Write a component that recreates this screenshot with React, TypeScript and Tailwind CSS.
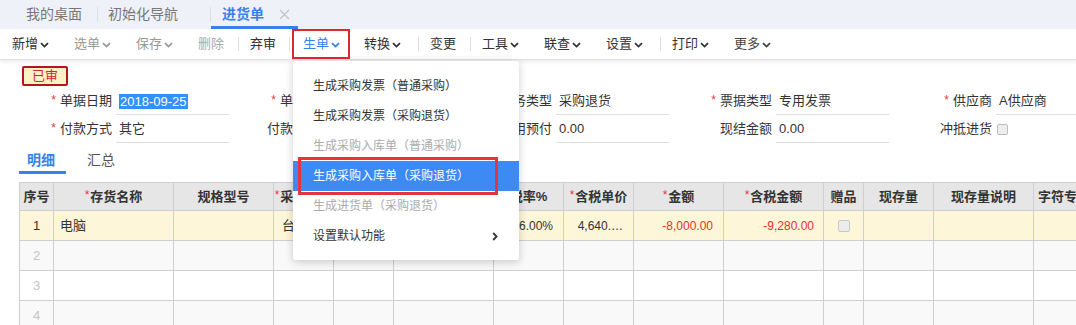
import React from "react";

const Chev = ({ className = "" }: { className?: string }) => (
  <svg width="9" height="6" viewBox="0 0 9 6" className={className}>
    <path d="M1 1.2 L4.5 4.6 L8 1.2" stroke="currentColor" strokeWidth="1.8" fill="none" />
  </svg>
);

type TItem =
  | { sep: true; mr: string }
  | { sep?: false; t: string; chev?: boolean; w: string; c: string; boxed?: boolean };

const toolbar: TItem[] = [
  { t: "新增", chev: true, w: "w-[62px]", c: "text-[#333]" },
  { t: "选单", chev: true, w: "w-[62px]", c: "text-[#999]" },
  { t: "保存", chev: true, w: "w-[62px]", c: "text-[#999]" },
  { t: "删除", w: "w-[40px]", c: "text-[#aaa]" },
  { sep: true, mr: "mr-[11px]" },
  { t: "弃审", w: "w-[39px]", c: "text-[#333]" },
  { sep: true, mr: "mr-[13px]" },
  { t: "生单", chev: true, w: "w-[61px]", c: "text-[#3a80ea]", boxed: true },
  { t: "转换", chev: true, w: "w-[54px]", c: "text-[#333]" },
  { sep: true, mr: "mr-[11px]" },
  { t: "变更", w: "w-[40px]", c: "text-[#333]" },
  { sep: true, mr: "mr-[11px]" },
  { t: "工具", chev: true, w: "w-[62px]", c: "text-[#333]" },
  { t: "联查", chev: true, w: "w-[62px]", c: "text-[#333]" },
  { t: "设置", chev: true, w: "w-[54px]", c: "text-[#333]" },
  { sep: true, mr: "mr-[11px]" },
  { t: "打印", chev: true, w: "w-[62px]", c: "text-[#333]" },
  { t: "更多", chev: true, w: "w-[62px]", c: "text-[#444]" },
];

type Field = { star?: boolean; label: string; value?: React.ReactNode; check?: boolean };

const row1: Field[] = [
  { star: true, label: "单据日期", value: <span className="bg-[#3390ff] text-white leading-[15px] px-[1px]">2018-09-25</span> },
  { star: true, label: "单据编号", value: "" },
  { star: true, label: "业务类型", value: "采购退货" },
  { star: true, label: "票据类型", value: "专用发票" },
  { star: true, label: "供应商", value: "A供应商" },
];
const row2: Field[] = [
  { star: true, label: "付款方式", value: "其它" },
  { label: "付款到期日", value: "" },
  { label: "使用预付", value: "0.00" },
  { label: "现结金额", value: "0.00" },
  { label: "冲抵进货", check: true },
];

const FieldRow = ({ fields }: { fields: Field[] }) => (
  <div className="flex h-[28px]">
    {fields.map((f, i) => (
      <div key={i} className="w-[220px] shrink-0 flex h-full">
        <div className="w-[112px] shrink-0 flex justify-end items-center h-[26px] text-[#333]">
          {f.star && <span className="text-[#e0393e] text-[12px] mr-[4px] relative top-[-1px]">*</span>}
          <span className="whitespace-nowrap">{f.label}</span>
        </div>
        {f.check ? (
          <div className="ml-[5px] h-[26px] flex items-center">
            <div className="w-[11px] h-[11px] border border-[#bdbdbd] bg-[#eeeeee] rounded-[2px]" />
          </div>
        ) : (
          <div className="ml-[4px] w-[113px] shrink-0 h-[27px] border-b border-[#dddddd] flex items-center pl-[3px] text-[#333] whitespace-nowrap">
            {f.value}
          </div>
        )}
      </div>
    ))}
  </div>
);

const widths = [
  "w-[35px] border-l",
  "w-[120px]",
  "w-[100px]",
  "w-[60px]",
  "w-[60px]",
  "w-[100px]",
  "w-[70px]",
  "w-[70px]",
  "w-[90px]",
  "w-[100px]",
  "w-[40px]",
  "w-[70px]",
  "w-[100px]",
  "w-[100px]",
];

const headers: [boolean, string][] = [
  [false, "序号"],
  [true, "存货名称"],
  [false, "规格型号"],
  [true, "采购单位"],
  [true, "数量"],
  [false, "无税单价"],
  [false, "税率%"],
  [true, "含税单价"],
  [true, "金额"],
  [true, "含税金额"],
  [false, "赠品"],
  [false, "现存量"],
  [false, "现存量说明"],
  [false, "字符专用自由项"],
];

const Check = () => <div className="w-[12px] h-[12px] border border-[#c9c9c9] bg-[#ececec] rounded-[2px]" />;

const menuItems: { t: string; dis?: boolean; active?: boolean; sub?: boolean }[] = [
  { t: "生成采购发票（普通采购）" },
  { t: "生成采购发票（采购退货）" },
  { t: "生成采购入库单（普通采购）", dis: true },
  { t: "生成采购入库单（采购退货）", active: true },
  { t: "生成进货单（采购退货）", dis: true },
  { t: "设置默认功能", sub: true },
];

export default function App() {
  const rowBgs = ["bg-[#fdf6d8]", "bg-[#f9f9f9]", "bg-white", "bg-[#f9f9f9]"];
  return (
    <div className="relative w-[1076px] h-[325px] overflow-hidden bg-white text-[13px] text-[#333] font-['Liberation_Sans','Noto_Sans_CJK_SC',sans-serif]">
      {/* top tabs */}
      <div className="h-[29px] bg-[#eef1f7] flex items-stretch text-[14px]">
        <div className="flex items-center pl-[26px] pr-[15px] text-[#777]">我的桌面</div>
        <div className="w-px bg-[#dcdfe6] my-[7px]" />
        <div className="flex items-center pl-[10px] pr-[32px] text-[#777]">初始化导航</div>
        <div className="w-px bg-[#dcdfe6] my-[7px]" />
        <div className="flex items-center pl-[11px] pr-[8px] pt-[3px] border-b-[3px] border-[#3a80ea]">
          <span className="font-bold text-[#3a80ea]">进货单</span>
          <svg width="11" height="11" viewBox="0 0 11 11" className="ml-[15px]">
            <path d="M1 1 L10 10 M10 1 L1 10" stroke="#c4c4c4" strokeWidth="1.4" />
          </svg>
        </div>
      </div>

      {/* toolbar */}
      <div className="relative z-[1] h-[31px] bg-white border-b border-[#e2e2e2] shadow-[0_2px_4px_rgba(0,0,0,0.08)] flex items-center pl-[12px]">
        {toolbar.map((it, i) =>
          it.sep ? (
            <div key={i} className={`w-px h-[14px] bg-[#dddddd] ${it.mr}`} />
          ) : (
            <div key={i} className={`relative h-full flex items-center shrink-0 ${it.w} ${it.c}`}>
              <span>{it.t}</span>
              {it.chev && <Chev className="ml-[2px] mt-[1px]" />}
              {it.boxed && (
                <div className="absolute left-[-11px] top-0 w-[58px] h-[30px] border-2 border-[#e0282e]" />
              )}
            </div>
          )
        )}
      </div>

      {/* form */}
      <div className="pt-[6px]">
        <div className="ml-[22px] w-[46px] h-[20px] border-2 border-[#b5161c] bg-[#fdf1c6] text-[#d3262b] flex items-center justify-center rounded-[2px] text-[13px]">
          已审
        </div>
        <div className="mt-[2px]">
          <FieldRow fields={row1} />
          <FieldRow fields={row2} />
        </div>
      </div>

      {/* detail tabs */}
      <div className="ml-[19px] h-[30px] flex items-stretch text-[14px]">
        <div className="w-[47px] pl-[8px] pt-[5px] flex items-center border-b-[3px] border-[#3a80ea] font-bold text-[#3a80ea]">明细</div>
        <div className="ml-[21px] pt-[5px] pb-[3px] flex items-center text-[#555]">汇总</div>
      </div>

      {/* table */}
      <div className="ml-[19px] mt-[8px] w-max">
        <div className="flex h-[29px] bg-[#e6e6e6] border-t border-b border-[#cfcfcf]">
          {headers.map(([star, h], i) => (
            <div key={i} className={`${widths[i]} shrink-0 border-r border-[#cfcfcf] flex items-center justify-center font-bold whitespace-nowrap overflow-hidden`}>
              {star && <span className="text-[#e0393e] font-normal text-[12px] mr-[1px] relative top-[-2px]">*</span>}
              {h}
            </div>
          ))}
        </div>
        {[0, 1, 2, 3].map((r) => (
          <div key={r} className={`flex h-[30px] border-b border-[#cfcfcf] ${rowBgs[r]}`}>
            {widths.map((w, c) => {
              let content: React.ReactNode = null;
              let cls = "justify-start";
              if (c === 0) {
                content = <span className={r === 0 ? "text-[#333]" : "text-[#c4c4c4]"}>{r + 1}</span>;
                cls = "justify-center";
              } else if (r === 0) {
                if (c === 1) { content = "电脑"; cls = "justify-start pl-[6px]"; }
                if (c === 3) { content = "台"; cls = "justify-start pl-[8px]"; }
                if (c === 4) { content = <span className="text-[12px] text-[#e5322d]">-2.00</span>; cls = "justify-end pr-[10px]"; }
                if (c === 5) { content = <span className="text-[12px]">4,000.00</span>; cls = "justify-end pr-[10px]"; }
                if (c === 6) { content = <span className="text-[12px]">6.00%</span>; cls = "justify-end pr-[10px]"; }
                if (c === 7) { content = <span className="text-[12px]">4,640.…</span>; cls = "justify-end pr-[10px]"; }
                if (c === 8) { content = <span className="text-[12px] text-[#e5322d]">-8,000.00</span>; cls = "justify-end pr-[10px]"; }
                if (c === 9) { content = <span className="text-[12px] text-[#e5322d]">-9,280.00</span>; cls = "justify-end pr-[9px]"; }
                if (c === 10) { content = <Check />; cls = "justify-center"; }
              }
              return (
                <div key={c} className={`${w} shrink-0 border-r border-[#cfcfcf] flex items-center whitespace-nowrap overflow-hidden ${cls}`}>
                  {content}
                </div>
              );
            })}
          </div>
        ))}
      </div>

      {/* dropdown menu */}
      <div className="absolute z-10 left-[293px] top-[61px] w-[226px] bg-white rounded-[3px] shadow-[0_2px_8px_rgba(0,0,0,0.2)] pt-[10px] pb-[9px] text-[12px]">
        {menuItems.map((m, i) => (
          <div
            key={i}
            className={`relative h-[30px] flex items-center pl-[20px] pr-[20px] whitespace-nowrap ${
              m.active ? "bg-[#3d8af5] text-white" : m.dis ? "text-[#ababab]" : "text-[#333]"
            }`}
          >
            <span className="flex-1">{m.t}</span>
            {m.sub && (
              <svg width="6" height="9" viewBox="0 0 6 9" className="mr-[1px]">
                <path d="M1.2 1 L4.6 4.5 L1.2 8" stroke="#333" strokeWidth="1.8" fill="none" />
              </svg>
            )}
            {m.active && (
              <div className="absolute left-[5px] top-[-4px] w-[200px] h-[38px] border-[3px] border-[#e5353b]" />
            )}
          </div>
        ))}
      </div>
    </div>
  );
}
